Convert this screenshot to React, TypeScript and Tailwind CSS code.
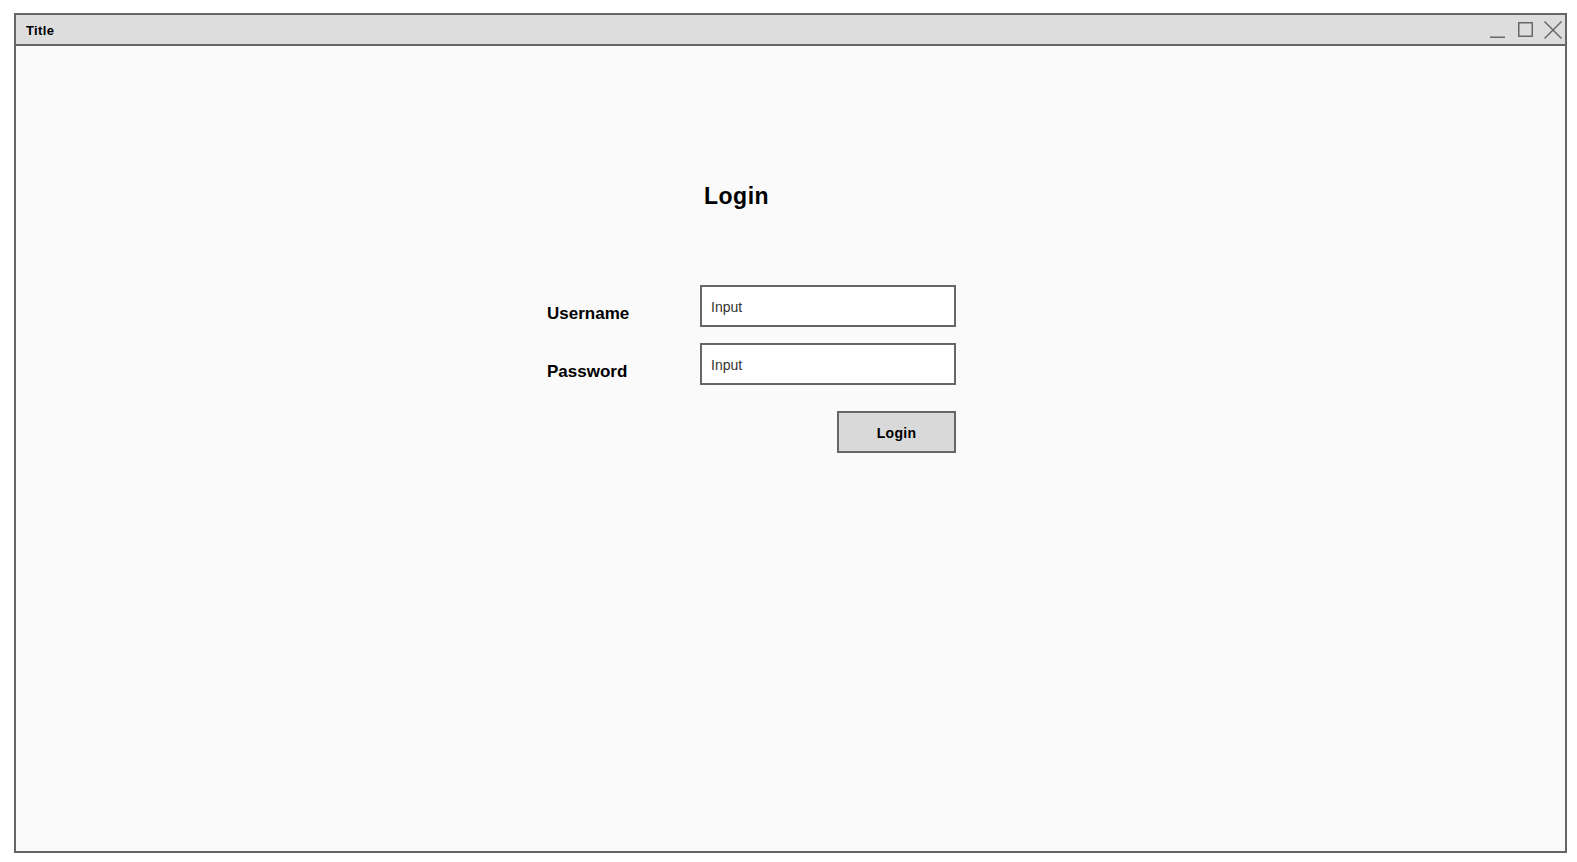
export default function App() {
  return (
    <div
      className="min-h-screen bg-white pt-[13px] pl-[14px]"
      style={{ fontFamily: '"Liberation Sans", Arial, sans-serif' }}
    >
      <div className="w-[1553px] h-[840px] border-2 border-[#666666] bg-[#fafafa] flex flex-col">
        {/* TITLE BAR */}
        <div className="h-[31px] shrink-0 bg-[#dddddd] border-b-2 border-[#666666] flex items-center justify-between">
          <div className="pl-[10px] pt-[2px] text-[13px] font-bold text-black leading-none tracking-[0.4px]">
            Title
          </div>
          <svg
            width="78"
            height="29"
            viewBox="0 0 78 29"
            fill="none"
            stroke="#666666"
            strokeWidth="1.5"
          >
            <line x1="3" y1="22.25" x2="18" y2="22.25" />
            <rect x="31.75" y="7.75" width="13.5" height="13.5" />
            <line x1="57.5" y1="6.5" x2="74.5" y2="23.5" />
            <line x1="74.5" y1="6.5" x2="57.5" y2="23.5" />
          </svg>
        </div>

        {/* CONTENT */}
        <div className="flex-1 pl-[530px] pt-[135px]">
          <div className="ml-[158px] text-[23px] leading-[30px] font-bold text-black tracking-[0.5px]">
            Login
          </div>

          <div className="mt-[74px] flex flex-col gap-[16px]">
            <div className="flex items-start">
              <div className="w-[154px] pl-[1px] mt-[19px] text-[17px] leading-[20px] font-bold text-black">
                Username
              </div>
              <input
                placeholder="Input"
                className="w-[256px] h-[42px] border-2 border-[#666666] bg-white pl-[9px] pt-[1px] text-[14px] text-[#333333] placeholder:text-[#333333] outline-none"
              />
            </div>
            <div className="flex items-start">
              <div className="w-[154px] pl-[1px] mt-[19px] text-[17px] leading-[20px] font-bold text-black">
                Password
              </div>
              <input
                placeholder="Input"
                className="w-[256px] h-[42px] border-2 border-[#666666] bg-white pl-[9px] pt-[1px] text-[14px] text-[#333333] placeholder:text-[#333333] outline-none"
              />
            </div>
          </div>

          <button className="mt-[26px] ml-[291px] w-[119px] h-[42px] border-2 border-[#666666] bg-[#d9d9d9] pt-[2px] text-[14px] font-bold text-black tracking-[0.3px]">
            Login
          </button>
        </div>
      </div>
    </div>
  );
}
